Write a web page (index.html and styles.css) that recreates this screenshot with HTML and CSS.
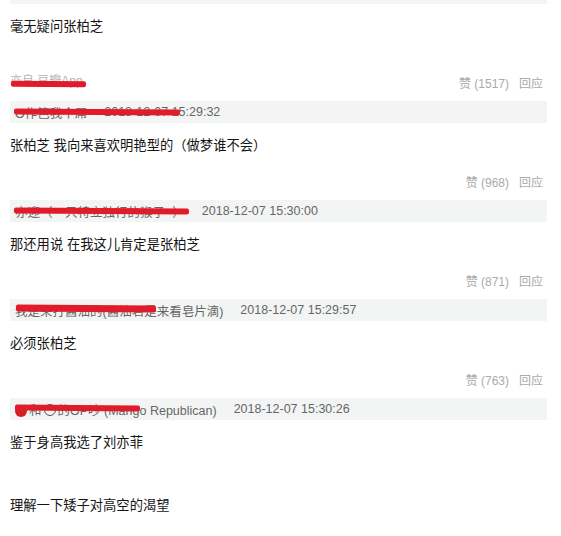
FILE: index.html
```html
<!DOCTYPE html>
<html lang="zh-CN">
<head>
<meta charset="utf-8">
<title>评论</title>
<link rel="stylesheet" href="styles.css">
</head>
<body>
<div class="page">
  <div class="quote-tail"></div>
  <p class="content first">毫无疑问张柏芝</p>

  <div class="comment">
    <div class="meta-row first-meta">
      <span class="author">亦良 豆瓣App<span class="scribble s-author"></span></span>
      <span class="actions"><span>赞 (1517)</span><span>回应</span></span>
    </div>
    <div class="quote">
      <span class="qname">O作笆我个屌</span><span class="qdate">2018-12-07 15:29:32</span>
      <span class="scribble s-q1"></span>
    </div>
    <p class="content">张柏芝 我向来喜欢明艳型的（做梦谁不会）</p>
  </div>

  <div class="comment">
    <div class="meta-row">
      <span class="author"></span>
      <span class="actions"><span>赞 (968)</span><span>回应</span></span>
    </div>
    <div class="quote">
      <span class="qname">亦迎（一只特立独行的猴子~）</span><span class="qdate">2018-12-07 15:30:00</span>
      <span class="scribble s-q2"></span>
    </div>
    <p class="content">那还用说 在我这儿肯定是张柏芝</p>
  </div>

  <div class="comment">
    <div class="meta-row">
      <span class="author"></span>
      <span class="actions"><span>赞 (871)</span><span>回应</span></span>
    </div>
    <div class="quote">
      <span class="qname">我是来打酱油的(酱油君是来看皂片滴)</span><span class="qdate">2018-12-07 15:29:57</span>
      <span class="scribble s-q3"></span>
    </div>
    <p class="content">必须张柏芝</p>
  </div>

  <div class="comment">
    <div class="meta-row">
      <span class="author"></span>
      <span class="actions"><span>赞 (763)</span><span>回应</span></span>
    </div>
    <div class="quote">
      <span class="qname"><span class="dot"></span>和<span class="ring"></span>的OP吵 (Mango Republican)</span><span class="qdate">2018-12-07 15:30:26</span>
      <span class="scribble s-q4"></span>
    </div>
    <p class="content">鉴于身高我选了刘亦菲</p>
  </div>

  <p class="content last">理解一下矮子对高空的渴望</p>
</div>
</body>
</html>
```

FILE: styles.css
```css
html, body {
  margin: 0;
  padding: 0;
  background: #ffffff;
}

body {
  font-family: "Liberation Sans", "Noto Sans CJK SC", sans-serif;
  font-size: 13.3px;
  color: #111111;
  text-spacing-trim: space-all;
}

.page {
  padding: 0 14px 0 10px;
}

.quote-tail {
  height: 4px;
  background: #f3f5f5;
}

.content {
  margin: 13px 0 0;
  line-height: 20px;
  font-size: 13.3px;
  color: #151515;
}

.content.first {
  margin-top: 13px;
}

.content.last {
  margin-top: 43px;
}

.meta-row {
  display: flex;
  justify-content: space-between;
  align-items: center;
  height: 20px;
  line-height: 20px;
  margin-top: 17px;
  font-size: 12px;
  color: #aaaaaa;
}

.meta-row.first-meta {
  margin-top: 37px;
}

.author {
  position: relative;
  color: #b4b4b4;
  font-size: 12px;
  margin-top: -6px;
}

.actions {
  display: flex;
  gap: 10px;
  padding-right: 4px;
}

.quote {
  position: relative;
  display: flex;
  align-items: center;
  height: 22px;
  margin-top: 7px;
  padding: 0 5px;
  background: #f3f5f5;
  font-size: 12.5px;
  color: #666666;
}

.qdate {
  margin-left: 17px;
}

.scribble {
  position: absolute;
  height: 6px;
  background: #e21b2a;
  border-radius: 2px;
  transform: rotate(0.4deg);
}

.s-author {
  left: 1px;
  top: 10px;
  width: 75px;
}

.s-q1 {
  left: 4px;
  top: 8px;
  width: 166px;
}

.s-q2 {
  left: 4px;
  top: 8px;
  width: 175px;
}

.s-q3 {
  left: 6px;
  top: 6px;
  width: 140px;
  height: 7px;
}

.s-q4 {
  left: 5px;
  top: 7px;
  width: 125px;
}

.dot {
  display: inline-block;
  width: 12px;
  height: 12px;
  margin-right: 2px;
  border-radius: 50%;
  background: #d41e24;
  vertical-align: -2px;
}

.ring {
  display: inline-block;
  width: 10px;
  height: 10px;
  margin: 0 2px;
  border-radius: 50%;
  border: 1px solid #555555;
  vertical-align: -1px;
}
```
